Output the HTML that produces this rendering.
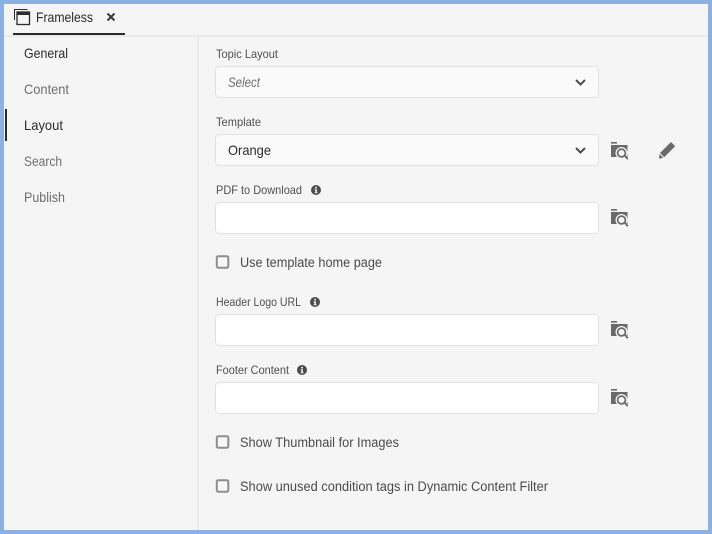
<!DOCTYPE html>
<html><head><meta charset="utf-8">
<style>
html,body{margin:0;padding:0;background:#8ab1e2;width:712px;height:534px;overflow:hidden}
svg{display:block}
text{font-family:"Liberation Sans",sans-serif;font-size:13px}
.n{font-size:14px}
.l{fill:#505050;font-size:12px}
.c{fill:#4b4b4b;font-size:13.5px}
</style></head><body>
<svg width="712" height="534" viewBox="0 0 712 534" xmlns="http://www.w3.org/2000/svg">
<defs>
<g id="f">
<path fill="#6a6a6a" d="M0 0h6v1.600H0z"/>
<path fill="#6a6a6a" d="M0 3h16.500v12H0z"/>
<circle cx="10.500" cy="11" r="6" fill="#f5f5f5"/>
<circle cx="10.500" cy="11" r="3.900" fill="#f5f5f5" stroke="#6a6a6a" stroke-width="1.700"/>
<path fill="#6a6a6a" d="M13.200 14.500l1.300-1.300 3 3.300-1.300 1.300z"/>
</g>
<path id="v" d="M0 0l4.500 4.500L9 0" fill="none" stroke="#4b4b4b" stroke-width="2"/>
<g id="i"><circle cx="5" cy="5" r="5" fill="#4b4b4b"/><rect x="4.200" y="1.800" width="1.700" height="1.600" fill="#f5f5f5"/><path d="M3.600 4.300h2.300v3.100h.7v.9H3.600v-.9h.8V5.200h-.8z" fill="#f5f5f5"/></g>
<rect id="b" width="11.500" height="11.500" rx="1.500" fill="#f8f8f8" stroke="#8e8e8e" stroke-width="2"/>
</defs>

<rect x="4" y="4" width="704" height="526" fill="#f5f5f5"/>
<rect x="4" y="35" width="704" height="2" fill="#eaeaea"/>
<rect x="13" y="33" width="112" height="2" fill="#2c2c2c"/>
<rect x="197" y="37" width="2" height="493" fill="#eaeaea"/>
<rect x="5" y="109" width="2" height="32" fill="#2c2c2c"/>

<!-- tab -->
<path d="M14.500 20V9.500h13" fill="none" stroke="#2c2c2c" stroke-width="1"/>
<rect x="17" y="12" width="12.500" height="12.500" fill="none" stroke="#2c2c2c" stroke-width="1.300"/>
<rect x="17" y="12" width="13" height="3" fill="#2c2c2c"/>
<text x="36" y="22" class="n" fill="#2c2c2c" textLength="57" lengthAdjust="spacingAndGlyphs">Frameless</text>
<path d="M107.500 13.500l7 7M114.500 13.500l-7 7" stroke="#3a3a3a" stroke-width="2" fill="none"/>

<!-- nav -->
<text x="24" y="58" class="n" fill="#2c2c2c" textLength="44" lengthAdjust="spacingAndGlyphs">General</text>
<text x="24" y="94" class="n" fill="#6e6e6e" textLength="45" lengthAdjust="spacingAndGlyphs">Content</text>
<text x="24" y="130" class="n" fill="#2c2c2c" textLength="39" lengthAdjust="spacingAndGlyphs">Layout</text>
<text x="24" y="166" class="n" fill="#6e6e6e" textLength="38" lengthAdjust="spacingAndGlyphs">Search</text>
<text x="24" y="202" class="n" fill="#6e6e6e" textLength="41" lengthAdjust="spacingAndGlyphs">Publish</text>

<!-- topic layout -->
<text x="216" y="58" class="l" textLength="62" lengthAdjust="spacingAndGlyphs">Topic Layout</text>
<rect x="215.500" y="66.500" width="383" height="31" rx="4" fill="#fafafa" stroke="#e1e1e1"/>
<text x="228" y="87" fill="#6e6e6e" font-style="italic" textLength="32" lengthAdjust="spacingAndGlyphs" style="font-size:14px">Select</text>
<use href="#v" x="576" y="80"/>

<!-- template -->
<text x="216" y="126" class="l" textLength="45" lengthAdjust="spacingAndGlyphs">Template</text>
<rect x="215.500" y="134.500" width="383" height="31" rx="4" fill="#fafafa" stroke="#e1e1e1"/>
<text x="228" y="155" fill="#2c2c2c" textLength="43" lengthAdjust="spacingAndGlyphs" style="font-size:14px">Orange</text>
<use href="#v" x="576" y="148"/>
<use href="#f" x="611" y="142"/>
<g fill="#6a6a6a"><path d="M671 142l4.200 4.200-11 11-4.200-4.200z"/><path d="M659.500 154l3.700 3.700-4.200 1z"/></g>

<!-- pdf -->
<text x="216" y="194" class="l" textLength="86" lengthAdjust="spacingAndGlyphs">PDF to Download</text>
<use href="#i" x="311" y="185"/>
<rect x="215.500" y="202.500" width="383" height="31" rx="4" fill="#fff" stroke="#e1e1e1"/>
<use href="#f" x="611" y="209"/>

<!-- cb1 -->
<use href="#b" x="216.800" y="256.200"/>
<text x="240" y="267" class="c" textLength="142" lengthAdjust="spacingAndGlyphs">Use template home page</text>

<!-- header logo -->
<text x="216" y="306" class="l" textLength="85" lengthAdjust="spacingAndGlyphs">Header Logo URL</text>
<use href="#i" x="310" y="297"/>
<rect x="215.500" y="314.500" width="383" height="31" rx="4" fill="#fff" stroke="#e1e1e1"/>
<use href="#f" x="611" y="321"/>

<!-- footer -->
<text x="216" y="374" class="l" textLength="73" lengthAdjust="spacingAndGlyphs">Footer Content</text>
<use href="#i" x="297" y="365"/>
<rect x="215.500" y="382.500" width="383" height="31" rx="4" fill="#fff" stroke="#e1e1e1"/>
<use href="#f" x="611" y="389"/>

<!-- cbs -->
<use href="#b" x="216.800" y="436.200"/>
<text x="240" y="447" class="c" textLength="159" lengthAdjust="spacingAndGlyphs">Show Thumbnail for Images</text>
<use href="#b" x="216.800" y="480.200"/>
<text x="240" y="491" class="c" textLength="308" lengthAdjust="spacingAndGlyphs">Show unused condition tags in Dynamic Content Filter</text>
</svg>
</body></html>
